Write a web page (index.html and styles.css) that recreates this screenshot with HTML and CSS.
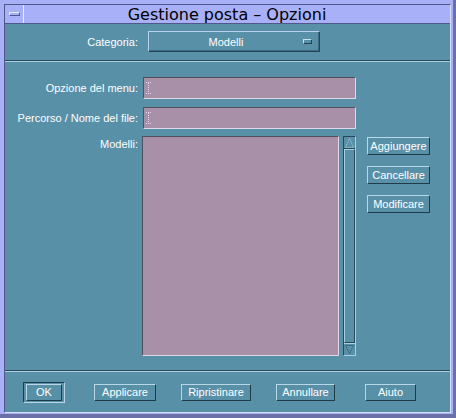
FILE: index.html
```html
<!DOCTYPE html>
<html>
<head>
<meta charset="utf-8">
<link rel="stylesheet" href="styles.css">
</head>
<body>
<div class="window">
  <div class="frame">
    <div class="titlebar">
      <div class="menubtn"><span class="menuicon"></span></div>
      <div class="title">Gestione posta – Opzioni</div>
    </div>
    <div class="body">
      <div class="catrow">
        <span class="label">Categoria:</span>
        <div class="select"><span class="seltext">Modelli</span><span class="selind"></span></div>
      </div>
      <div class="sep"></div>
      <div class="form">
        <span class="label">Opzione del menu:</span>
        <div class="field first"><svg class="ibeam" width="5" height="12" viewBox="0 0 5 12"><path d="M0 0.5H5M0 11.5H5" stroke="#e4dce8" stroke-width="1" stroke-dasharray="1 1"/><path d="M2.5 1V11" stroke="#e4dce8" stroke-width="1" stroke-dasharray="1 1"/></svg></div>
        <span class="label">Percorso / Nome del file:</span>
        <div class="field"><svg class="ibeam" width="5" height="12" viewBox="0 0 5 12"><path d="M0 0.5H5M0 11.5H5" stroke="#e4dce8" stroke-width="1" stroke-dasharray="1 1"/><path d="M2.5 1V11" stroke="#e4dce8" stroke-width="1" stroke-dasharray="1 1"/></svg></div>
        <span class="label top">Modelli:</span>
        <div class="listrow">
          <div class="list"></div>
          <div class="scroll">
            <div class="arrow"><svg width="11" height="12" viewBox="0 0 11 12"><path d="M5.5 1.5L1.5 10.5H9.5Z" fill="none" stroke="#a8d0e0" stroke-width="1" stroke-dasharray="1 1"/><path d="M0 11.5H11" stroke="#284858"/></svg></div>
            <div class="thumb"></div>
            <div class="arrow"><svg width="11" height="12" viewBox="0 0 11 12"><path d="M0 0.5H11" stroke="#a8d0e0"/><path d="M5.5 10.5L1.5 2.5H9.5Z" fill="none" stroke="#284858" stroke-width="1" stroke-dasharray="1 1"/></svg></div>
          </div>
          <div class="sidebtns">
            <div class="btn side">Aggiungere</div>
            <div class="btn side">Cancellare</div>
            <div class="btn side">Modificare</div>
          </div>
        </div>
      </div>
      <div class="sep bottomsep"></div>
      <div class="btnrow">
        <div class="ring"><div class="btn b-ok">OK</div></div>
        <div class="btn b-apply">Applicare</div>
        <div class="btn b-reset">Ripristinare</div>
        <div class="btn b-cancel">Annullare</div>
        <div class="btn b-help">Aiuto</div>
      </div>
    </div>
  </div>
</div>
</body>
</html>
```
FILE: styles.css
```css
html, body {
  margin: 0;
  padding: 0;
}
body {
  font-family: "Liberation Sans", Arial, sans-serif;
  font-size: 11px;
  color: #ffffff;
}
.window {
  width: 456px;
  height: 418px;
  box-sizing: border-box;
  background: #a8b0f8;
  padding: 4px 2px 1px 4px;
  border-right: 3px solid #6c70a8;
  border-bottom: 4px solid #6c70a8;
}
.frame {
  height: 100%;
  box-sizing: border-box;
  border: 1px solid;
  border-color: #50588a #d8dcff #d8dcff #50588a;
  display: flex;
  flex-direction: column;
}
.titlebar {
  display: flex;
  height: 19px;
  flex: none;
  box-sizing: border-box;
  border-bottom: 1px solid #50588a;
  background: #a8b0f8;
}
.menubtn {
  width: 18px;
  border-right: 1px solid #e8ecff;
  display: flex;
  align-items: center;
  justify-content: center;
}
.menuicon {
  width: 11px;
  height: 4px;
  box-sizing: border-box;
  border: 1px solid;
  border-color: #e8ecff #50588a #50588a #e8ecff;
}
.title {
  flex: 1;
  text-align: center;
  font-family: "DejaVu Sans", sans-serif;
  font-size: 16px;
  line-height: 18px;
  padding-top: 1px;
  padding-right: 20px;
  color: #000000;
  white-space: nowrap;
}
.body {
  flex: 1;
  background: #5890a8;
  display: flex;
  flex-direction: column;
}
.catrow {
  display: flex;
  align-items: center;
  margin-top: 7px;
  height: 21px;
}
.label {
  text-align: right;
  white-space: nowrap;
}
.catrow .label {
  width: 133px;
}
.select {
  margin-left: 10px;
  width: 172px;
  height: 21px;
  box-sizing: border-box;
  border: 1px solid;
  border-color: #b8d0f0 #284656 #284656 #b8d0f0;
  box-shadow: inset -1px -1px 0 #3c6a80;
  display: flex;
  align-items: center;
}
.seltext {
  flex: 1;
  text-align: center;
}
.selind {
  width: 9px;
  height: 5px;
  box-sizing: border-box;
  border: 1px solid;
  border-color: #c8e0f0 #284050 #284050 #c8e0f0;
  margin-right: 7px;
}
.sep {
  height: 0;
  border-top: 1px solid #284858;
  border-bottom: 1px solid #a8d0e0;
  margin-top: 8px;
}
.form {
  display: grid;
  grid-template-columns: 133px auto;
  column-gap: 5px;
  row-gap: 8px;
  margin-top: 15px;
}
.form .label {
  align-self: center;
}
.form .label.top {
  align-self: start;
  padding-top: 1px;
}
.field {
  width: 213px;
  height: 22px;
  box-sizing: border-box;
  background: #a890a8;
  border: 1px solid;
  border-color: #50505e #e0d8e8 #e0d8e8 #50505e;
  padding: 4px 0 0 2px;
}
.ibeam {
  display: block;
}
.listrow {
  display: flex;
  margin-top: -1px;
  margin-left: -1px;
}
.list {
  width: 197px;
  height: 220px;
  box-sizing: border-box;
  background: #a890a8;
  border: 1px solid;
  border-color: #50505e #e0d8e8 #e0d8e8 #50505e;
}
.scroll {
  margin-left: 4px;
  width: 13px;
  height: 220px;
  box-sizing: border-box;
  display: flex;
  flex-direction: column;
  border: 1px solid;
  border-color: #284858 #a8d0e0 #a8d0e0 #284858;
}
.arrow {
  height: 12px;
  flex: none;
}
.arrow svg {
  display: block;
}
.thumb {
  flex: 1;
  border: 1px solid;
  border-color: #a8d0e0 #284858 #284858 #a8d0e0;
}
.sidebtns {
  margin-left: 11px;
  display: flex;
  flex-direction: column;
  gap: 11px;
  padding-top: 1px;
}
.btn {
  box-sizing: border-box;
  height: 17px;
  line-height: 15px;
  text-align: center;
  white-space: nowrap;
  border: 1px solid;
  border-color: #b8d8e8 #203c48 #203c48 #b8d8e8;
}
.btn.side {
  width: 63px;
  height: 18px;
  line-height: 16px;
}
.bottomsep {
  margin-top: 14px;
}
.btnrow {
  display: flex;
  align-items: center;
  margin-top: 10px;
  padding-left: 18px;
}
.ring {
  border: 1px solid;
  border-color: #203c48 #b8d8e8 #b8d8e8 #203c48;
  padding: 1px 2px;
}
.b-ok { width: 36px; }
.b-apply { width: 62px; margin-left: 29px; }
.b-reset { width: 70px; margin-left: 25px; }
.b-cancel { width: 59px; margin-left: 25px; }
.b-help { width: 51px; margin-left: 30px; }
```
